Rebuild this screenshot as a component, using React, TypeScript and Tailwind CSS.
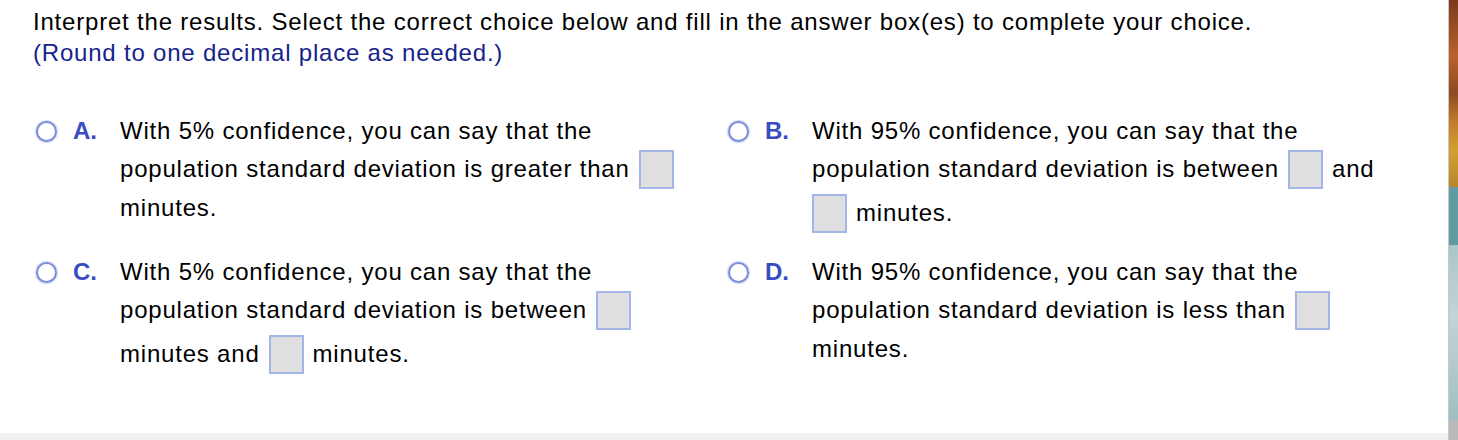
import React from 'react';

function Radio() {
  return (
    <div className="w-[41px] shrink-0 pt-[9px] pl-[4px]">
      <div className="w-[21px] h-[21px] rounded-full border-2 border-[#7b8cd8] shadow-[0_0_1px_1px_rgba(123,140,216,0.35)]" />
    </div>
  );
}

function Box({ className = '' }: { className?: string }) {
  return <span className={`inline-block w-[35px] h-[39px] border-2 border-[#a3b6e6] bg-[#dfdfdf] align-middle ${className}`} />;
}

function Option({ letter, children }: { letter: string; children: React.ReactNode }) {
  return (
    <div className="flex">
      <Radio />
      <div className="w-[47px] shrink-0 h-[38px] flex items-center font-bold text-[#3a4cc2] tracking-normal">{letter}.</div>
      <div className="flex flex-col">{children}</div>
    </div>
  );
}

function Line({ children, className = '' }: { children: React.ReactNode; className?: string }) {
  return <div className={`h-[38px] flex items-center gap-[9px] whitespace-nowrap ${className}`}>{children}</div>;
}

export default function App() {
  return (
    <div className="w-[1458px] h-[440px] flex bg-white text-black font-['Liberation_Sans',Arial,sans-serif] text-[24px] tracking-[0.8px] overflow-hidden">
      <div className="w-[1449px] flex flex-col border-r border-[#c8c8c8]">
        <div className="flex-1 pl-[32px] pt-[6px]">
          <div className="leading-[31px] pl-[1px]">
            <div>Interpret the results. Select the correct choice below and fill in the answer box(es) to complete your choice.</div>
            <div className="text-[#16238c]">(Round to one decimal place as needed.)</div>
          </div>

          <div className="grid grid-cols-[692px_1fr] gap-y-[21px] mt-[44px]">
            <Option letter="A">
              <Line>With 5% confidence, you can say that the</Line>
              <Line>population standard deviation is greater than <Box /></Line>
              <Line className="h-[40px]">minutes.</Line>
            </Option>
            <Option letter="B">
              <Line>With 95% confidence, you can say that the</Line>
              <Line>population standard deviation is between <Box /> and</Line>
              <Line className="mt-[6px]">
                <Box /> minutes.
              </Line>
            </Option>
            <Option letter="C">
              <Line>With 5% confidence, you can say that the</Line>
              <Line>population standard deviation is between <Box /></Line>
              <Line className="mt-[6px]">
                minutes and <Box /> minutes.
              </Line>
            </Option>
            <Option letter="D">
              <Line>With 95% confidence, you can say that the</Line>
              <Line>population standard deviation is less than <Box /></Line>
              <Line className="h-[40px]">minutes.</Line>
            </Option>
          </div>
        </div>
        <div className="h-[7px] bg-[#f0f0f0]" />
      </div>

      {/* desktop peeking at the right edge */}
      <div className="w-[9px] flex flex-col">
        <div className="h-[187px] bg-[linear-gradient(180deg,#7a3a1c_0%,#b8622c_30%,#8e4a22_50%,#c07a2a_65%,#d2a031_80%,#b8862a_100%)]" />
        <div className="h-[58px] bg-[#5f9ba1]" />
        <div className="flex-1 bg-[linear-gradient(180deg,#a9c6c8_0%,#c3d4d5_40%,#9fbfc1_100%)]" />
        <div className="h-[20px] bg-[#b9b9b9]" />
      </div>
    </div>
  );
}
